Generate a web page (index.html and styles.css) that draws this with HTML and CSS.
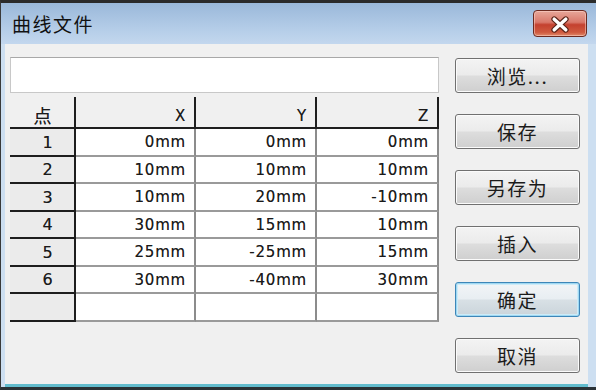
FILE: index.html
```html
<!DOCTYPE html>
<html lang="zh">
<head>
<meta charset="utf-8">
<title>曲线文件</title>
<link rel="stylesheet" href="styles.css">
</head>
<body>
<div class="window">
  <div class="titlebar">
    <span class="title">曲线文件</span>
    <button class="close" aria-label="关闭">
      <svg width="54" height="27" viewBox="0 0 54 27">
        <path d="M21 8 L33 19 M33 8 L21 19" stroke="#5a2418" stroke-width="6" stroke-linecap="round" fill="none"/>
        <path d="M21 8 L33 19 M33 8 L21 19" stroke="#ffffff" stroke-width="3.6" stroke-linecap="round" fill="none"/>
      </svg>
    </button>
  </div>
  <div class="client">
    <div class="left">
      <div class="path-input"></div>
      <div class="grid">
        <div class="cell head rh">点</div>
        <div class="cell head col">X</div>
        <div class="cell head col">Y</div>
        <div class="cell head col">Z</div>

        <div class="cell rh">1</div>
        <div class="cell num">0mm</div>
        <div class="cell num">0mm</div>
        <div class="cell num">0mm</div>

        <div class="cell rh">2</div>
        <div class="cell num">10mm</div>
        <div class="cell num">10mm</div>
        <div class="cell num">10mm</div>

        <div class="cell rh">3</div>
        <div class="cell num">10mm</div>
        <div class="cell num">20mm</div>
        <div class="cell num">-10mm</div>

        <div class="cell rh">4</div>
        <div class="cell num">30mm</div>
        <div class="cell num">15mm</div>
        <div class="cell num">10mm</div>

        <div class="cell rh">5</div>
        <div class="cell num">25mm</div>
        <div class="cell num">-25mm</div>
        <div class="cell num">15mm</div>

        <div class="cell rh">6</div>
        <div class="cell num">30mm</div>
        <div class="cell num">-40mm</div>
        <div class="cell num">30mm</div>

        <div class="cell rh"></div>
        <div class="cell num"></div>
        <div class="cell num"></div>
        <div class="cell num"></div>
      </div>
    </div>
    <div class="buttons">
      <button class="btn">浏览...</button>
      <button class="btn">保存</button>
      <button class="btn">另存为</button>
      <button class="btn">插入</button>
      <button class="btn default">确定</button>
      <button class="btn">取消</button>
    </div>
  </div>
</div>
</body>
</html>
```

FILE: styles.css
```css
* { box-sizing: border-box; }

html, body {
  margin: 0;
  padding: 0;
  background: #2a2a2a;
}

.window {
  width: 596px;
  height: 390px;
  border-top: 3px solid #2b2b2b;
  border-left: 1px solid #3a3a3a;
  border-bottom: 3px solid #2b3236;
  background: #cddff1;
  display: flex;
  flex-direction: column;
  font-family: "DejaVu Sans", "Noto Sans CJK SC", sans-serif;
}

.titlebar {
  height: 41px;
  flex: none;
  display: flex;
  align-items: flex-start;
  padding-left: 11px;
  background: linear-gradient(#9ab8da, #b7cfe9 70%, #c3d7ee);
}

.title {
  font-family: "Noto Sans CJK SC", sans-serif;
  font-size: 19px;
  letter-spacing: 1.5px;
  line-height: 41px;
  color: #111;
}

.close {
  margin: 7px 9px 0 auto;
  width: 54px;
  height: 27px;
  padding: 0;
  border: 1px solid #6b2a20;
  border-radius: 4px;
  background: linear-gradient(#e7a79a 0%, #d9786a 45%, #c4412f 55%, #cf5a3f 85%, #e08a6a 100%);
  box-shadow: inset 0 0 0 1px rgba(255, 220, 210, 0.5);
  display: flex;
}

.client {
  flex: 1;
  margin: 0 8px 0 4px;
  background: #f0f0f0;
  border-bottom: 3px solid #62bccd;
  display: flex;
  padding: 13px 0 0 5px;
}

.left {
  width: 429px;
  display: flex;
  flex-direction: column;
}

.path-input {
  height: 36px;
  background: #fff;
  border: 1px solid #c8c8c8;
  border-top-color: #a8a8a8;
}

.grid {
  margin-top: 4px;
  display: grid;
  grid-template-columns: 66px 120px 121px 122px;
  grid-template-rows: 32px repeat(3, 28px 27px) 28px;
}

.cell {
  border-right: 2px solid #8c8c8c;
  border-bottom: 2px solid #9a9a9a;
  background: #fff;
  color: #1a1a1a;
  font-size: 15px;
  letter-spacing: 0.8px;
  text-shadow: 0 0 0.6px rgba(0, 0, 0, 0.5);
  display: flex;
  align-items: center;
  justify-content: flex-end;
  padding-right: 8px;
}

.cell.rh {
  background: #ebebeb;
  border-right-color: #1e1e1e;
  border-bottom-color: #1e1e1e;
  justify-content: center;
  padding: 0 0 0 12px;
  font-size: 16px;
}

.cell.head {
  background: #f0f0f0;
  border-right-color: #1e1e1e;
  border-bottom-color: #1e1e1e;
  align-items: flex-end;
  padding-bottom: 2px;
  font-size: 15px;
}

.cell.head.rh {
  font-family: "Noto Sans CJK SC", sans-serif;
  font-size: 18px;
  padding-left: 2px;
  padding-bottom: 0;
  line-height: 1.3;
}

.buttons {
  margin-left: 16px;
  margin-top: 1px;
  display: flex;
  flex-direction: column;
  gap: 21px;
}

.btn {
  width: 125px;
  height: 35px;
  padding: 0;
  border: 1px solid #707070;
  border-radius: 3px;
  background: linear-gradient(#f3f3f3 0%, #ebebeb 48%, #dddddd 52%, #cfcfcf 100%);
  box-shadow: inset 0 0 0 1px #fbfbfb;
  font-family: "Noto Sans CJK SC", sans-serif;
  font-size: 19px;
  letter-spacing: 1.5px;
  color: #1b1b1b;
  line-height: 1;
}

.btn.default {
  border-color: #3d86b8;
  box-shadow: inset 0 0 0 1px #9fd8f2, inset 0 0 0 2px #cdebf8;
  background: linear-gradient(#f2f5f7 0%, #e8eef2 48%, #d8e0e5 52%, #cad4da 100%);
}
```
